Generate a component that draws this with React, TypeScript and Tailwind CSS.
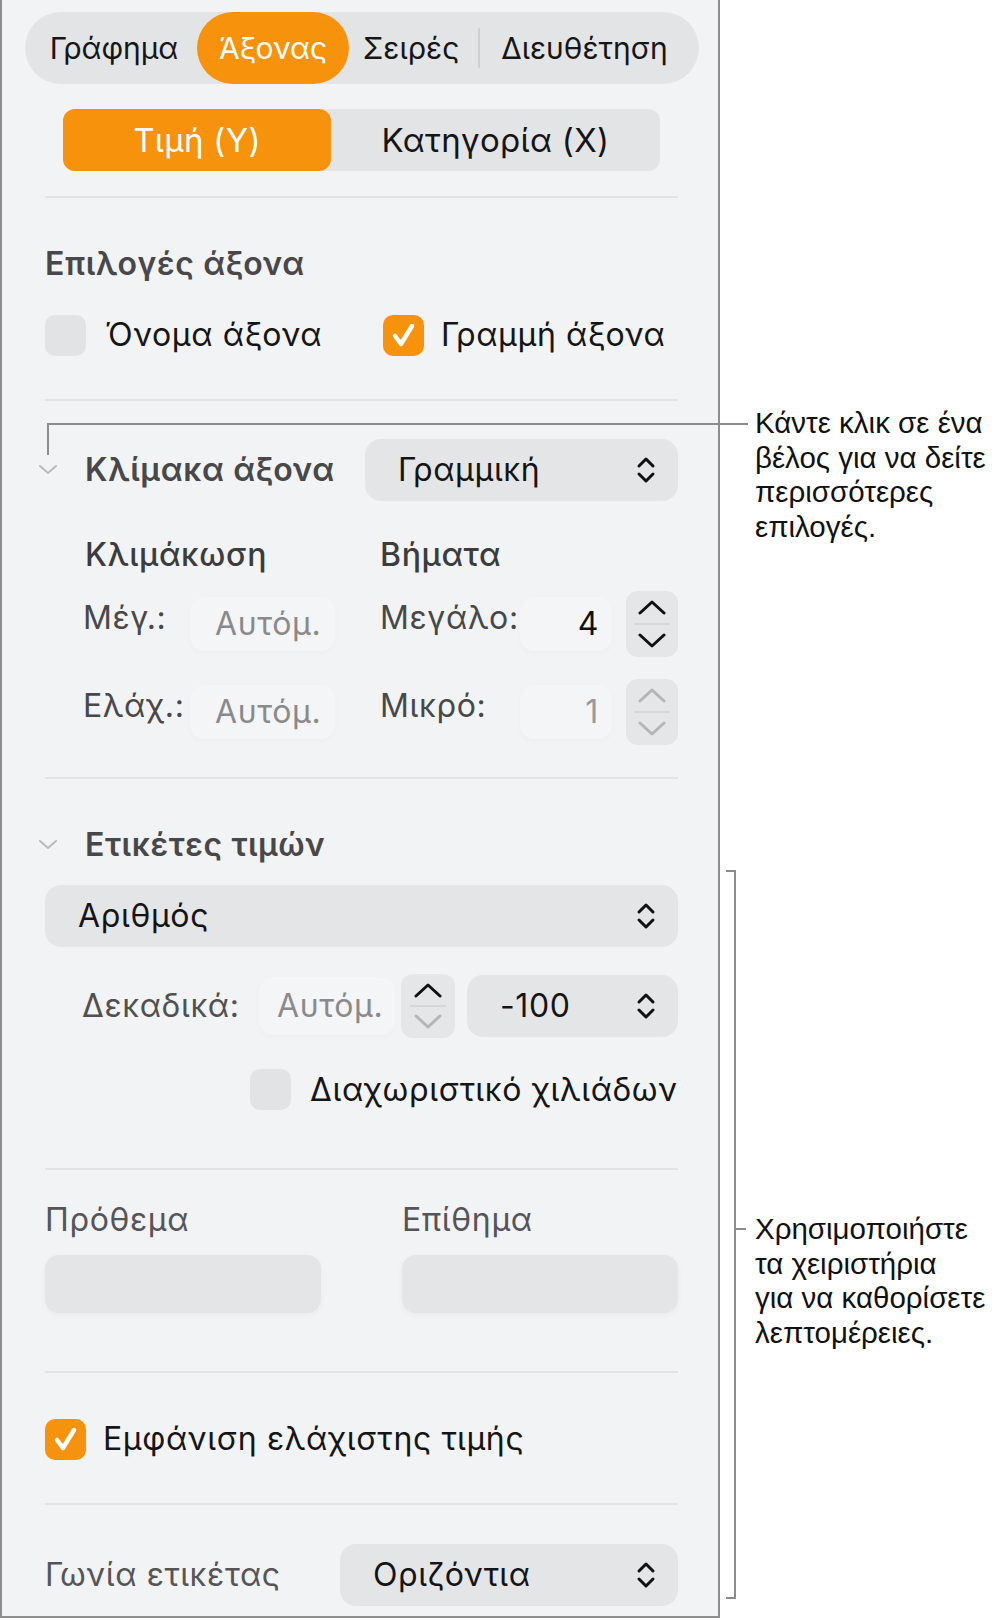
import React from "react";

const UpDown = () => (
  <svg width="20" height="28" viewBox="0 0 20 28" fill="none" stroke="#111" strokeWidth="3" strokeLinecap="round" strokeLinejoin="round">
    <path d="M3 10 L10 3 L17 10" />
    <path d="M3 18 L10 25 L17 18" />
  </svg>
);

const Stepper = ({ up, down, h = 66, w = 52 }: { up: string; down: string; h?: number; w?: number }) => (
  <div
    className="rounded-[12px] bg-[#e5e6e8] flex flex-col items-center justify-between py-[8px] shrink-0"
    style={{ width: w, height: h }}
  >
    <svg width="30" height="16" viewBox="0 0 30 16" fill="none" stroke={up} strokeWidth="3" strokeLinecap="round" strokeLinejoin="round">
      <path d="M3 14 L15 3 L27 14" />
    </svg>
    <div className="w-[36px] h-[2px] bg-[#d6d7d9]" />
    <svg width="30" height="16" viewBox="0 0 30 16" fill="none" stroke={down} strokeWidth="3" strokeLinecap="round" strokeLinejoin="round">
      <path d="M3 2 L15 13 L27 2" />
    </svg>
  </div>
);

const SectionChevron = () => (
  <svg width="20" height="12" viewBox="0 0 20 12" fill="none" stroke="#b9babc" strokeWidth="2" strokeLinecap="round" strokeLinejoin="round">
    <path d="M2 2 L10 9 L18 2" />
  </svg>
);

const Check = ({ on }: { on: boolean }) => (
  <div
    className={
      "w-[41px] h-[41px] rounded-[10px] flex items-center justify-center shrink-0 " +
      (on ? "bg-[#f7920c]" : "bg-[#e2e3e5]")
    }
  >
    {on && (
      <svg width="41" height="41" viewBox="0 0 41 41" fill="none" stroke="#fff" strokeWidth="4.5" strokeLinecap="round" strokeLinejoin="round">
        <path d="M12 21 L18 29 L29 11" />
      </svg>
    )}
  </div>
);

const Sep = () => <div className="h-[2px] bg-[#e2e3e5] shrink-0" />;

const Dropdown = ({ label, w, pl }: { label: string; w: number | string; pl: number }) => (
  <div
    className="h-[62px] rounded-[16px] bg-[#e4e5e7] flex items-center justify-between pr-[22px] text-[#141414] shrink-0"
    style={{ width: w, paddingLeft: pl }}
  >
    <span>{label}</span>
    <UpDown />
  </div>
);

const faint = "rounded-[14px] bg-[#f4f5f7] shadow-[0_2px_6px_rgba(0,0,0,0.025)] flex items-center";

export default function App() {
  return (
    <div className="relative w-[1003px] h-[1620px] bg-white flex font-['Inter',sans-serif] text-[32px] tracking-[0.02em] leading-none">
      {/* Panel */}
      <div className="w-[720px] h-[1618px] bg-[#f2f3f5] border-l-2 border-r-2 border-b-2 border-[#8e8e8e] flex flex-col pt-[12px]">
        {/* Tabs */}
        <div className="ml-[23px] w-[674px] h-[72px] rounded-full bg-[#e3e4e6] flex items-stretch pl-[6px] pr-[10px] text-[#161616] text-[30px] tracking-normal">
          <div className="w-[166px] flex items-center justify-center">Γράφημα</div>
          <div className="w-[152px] rounded-full bg-[#f7920c] text-white flex items-center justify-center">Άξονας</div>
          <div className="w-[124px] flex items-center justify-center">Σειρές</div>
          <div className="ml-[5px] w-[2px] h-[40px] self-center bg-[#cfd0d2]" />
          <div className="w-[209px] flex items-center justify-center">Διευθέτηση</div>
        </div>

        <div className="pl-[43px] pr-[40px] flex flex-col">
          {/* Value/Category segmented */}
          <div className="mt-[25px] ml-[18px] w-[597px] h-[62px] rounded-[12px] bg-[#e3e4e6] flex text-[33px] tracking-[0.01em] text-[#141414]">
            <div className="w-[268px] rounded-[12px] bg-[#f7920c] text-white flex items-center justify-center">Τιμή (Y)</div>
            <div className="flex-1 flex items-center justify-center">Κατηγορία (X)</div>
          </div>

          <div className="mt-[25px]"><Sep /></div>

          {/* Axis options */}
          <div className="mt-[46px] h-[40px] flex items-center font-semibold text-[#48484a]">Επιλογές άξονα</div>
          <div className="mt-[30px] h-[42px] flex items-center text-[#151515]">
            <div className="w-[338px] flex items-center">
              <Check on={false} />
              <span className="ml-[19px]">Όνομα άξονα</span>
            </div>
            <Check on={true} />
            <span className="ml-[17px]">Γραμμή άξονα</span>
          </div>

          <div className="mt-[43px]"><Sep /></div>

          {/* Axis scale */}
          <div className="mt-[38px] h-[62px] flex items-center">
            <div className="w-[40px] flex items-center"><div className="-ml-[7px]"><SectionChevron /></div></div>
            <span className="font-semibold text-[#48484a] w-[280px]">Κλίμακα άξονα</span>
            <Dropdown label="Γραμμική" w={313} pl={33} />
          </div>

          <div className="mt-[34px] h-[40px] flex items-center text-[#3c3c3e] font-medium">
            <span className="ml-[40px] w-[295px]">Κλιμάκωση</span>
            <span>Βήματα</span>
          </div>

          <div className="mt-[16px] h-[66px] flex items-center">
            <span className="ml-[38px] w-[107px] text-[#484849] mb-[12px]">Μέγ.:</span>
            <div className={"w-[145px] h-[54px] pl-[25px] text-[#8a8a8c] " + faint}>Αυτόμ.</div>
            <span className="ml-[45px] w-[140px] text-[#484849] mb-[12px]">Μεγάλο:</span>
            <div className={"w-[92px] h-[54px] justify-end pr-[13px] text-[#111] " + faint}>4</div>
            <div className="ml-[14px]"><Stepper up="#111" down="#111" /></div>
          </div>

          <div className="mt-[22px] h-[66px] flex items-center">
            <span className="ml-[38px] w-[107px] text-[#484849] mb-[12px]">Ελάχ.:</span>
            <div className={"w-[145px] h-[54px] pl-[25px] text-[#8a8a8c] " + faint}>Αυτόμ.</div>
            <span className="ml-[45px] w-[140px] text-[#484849] mb-[12px]">Μικρό:</span>
            <div className={"w-[92px] h-[54px] justify-end pr-[13px] text-[#9a9a9c] " + faint}>1</div>
            <div className="ml-[14px]"><Stepper up="#b4b5b7" down="#b4b5b7" /></div>
          </div>

          <div className="mt-[32px]"><Sep /></div>

          {/* Value labels */}
          <div className="mt-[46px] h-[40px] flex items-center">
            <div className="w-[40px] flex items-center"><div className="-ml-[7px]"><SectionChevron /></div></div>
            <span className="font-semibold text-[#48484a]">Ετικέτες τιμών</span>
          </div>

          <div className="mt-[20px]"><Dropdown label="Αριθμός" w="100%" pl={33} /></div>

          <div className="mt-[27px] h-[64px] flex items-center">
            <span className="ml-[37px] w-[177px] text-[#505052]">Δεκαδικά:</span>
            <div className={"w-[136px] h-[58px] pl-[18px] text-[#8a8a8c] " + faint}>Αυτόμ.</div>
            <div className="ml-[6px]"><Stepper up="#111" down="#b4b5b7" h={64} w={54} /></div>
            <div className="ml-[12px]"><Dropdown label="-100" w={211} pl={33} /></div>
          </div>

          <div className="mt-[31px] h-[41px] flex items-center text-[#151515]">
            <div className="ml-[205px]"><Check on={false} /></div>
            <span className="ml-[19px]">Διαχωριστικό χιλιάδων</span>
          </div>

          <div className="mt-[58px]"><Sep /></div>

          <div className="mt-[30px] h-[40px] flex items-center text-[#555557]">
            <span className="w-[357px]">Πρόθεμα</span>
            <span>Επίθημα</span>
          </div>

          <div className="mt-[15px] h-[58px] flex">
            <div className="w-[276px] h-[58px] rounded-[14px] bg-[#e4e5e7] shadow-[0_2px_6px_rgba(0,0,0,0.04)]" />
            <div className="ml-[81px] w-[276px] h-[58px] rounded-[14px] bg-[#e4e5e7] shadow-[0_2px_6px_rgba(0,0,0,0.04)]" />
          </div>

          <div className="mt-[58px]"><Sep /></div>

          <div className="mt-[45px] h-[42px] flex items-center text-[#151515]">
            <Check on={true} />
            <span className="ml-[17px]">Εμφάνιση ελάχιστης τιμής</span>
          </div>

          <div className="mt-[43px]"><Sep /></div>

          <div className="mt-[39px] h-[62px] flex items-center justify-between">
            <span className="text-[#555557]">Γωνία ετικέτας</span>
            <Dropdown label="Οριζόντια" w={338} pl={33} />
          </div>
        </div>
      </div>

      {/* Callout texts */}
      <div className="flex-1 pl-[35px] flex flex-col font-['Liberation_Sans',Arial,sans-serif] text-[29.5px] tracking-normal leading-[34.5px] text-[#111]">
        <div className="mt-[406px]">
          <div>Κάντε κλικ σε ένα</div>
          <div>βέλος για να δείτε</div>
          <div>περισσότερες</div>
          <div>επιλογές.</div>
        </div>
        <div className="mt-[668px]">
          <div>Χρησιμοποιήστε</div>
          <div>τα χειριστήρια</div>
          <div>για να καθορίσετε</div>
          <div>λεπτομέρειες.</div>
        </div>
      </div>

      {/* Callout lines */}
      <div className="absolute left-[47px] top-[423px] w-[701px] h-[2px] bg-[#8c8c8c]" />
      <div className="absolute left-[47px] top-[423px] w-[2px] h-[32px] bg-[#8c8c8c]" />
      <div className="absolute left-[734px] top-[870px] w-[2px] h-[729px] bg-[#8c8c8c]" />
      <div className="absolute left-[726px] top-[870px] w-[10px] h-[2px] bg-[#8c8c8c]" />
      <div className="absolute left-[726px] top-[1597px] w-[10px] h-[2px] bg-[#8c8c8c]" />
      <div className="absolute left-[736px] top-[1228px] w-[10px] h-[2px] bg-[#8c8c8c]" />
    </div>
  );
}
